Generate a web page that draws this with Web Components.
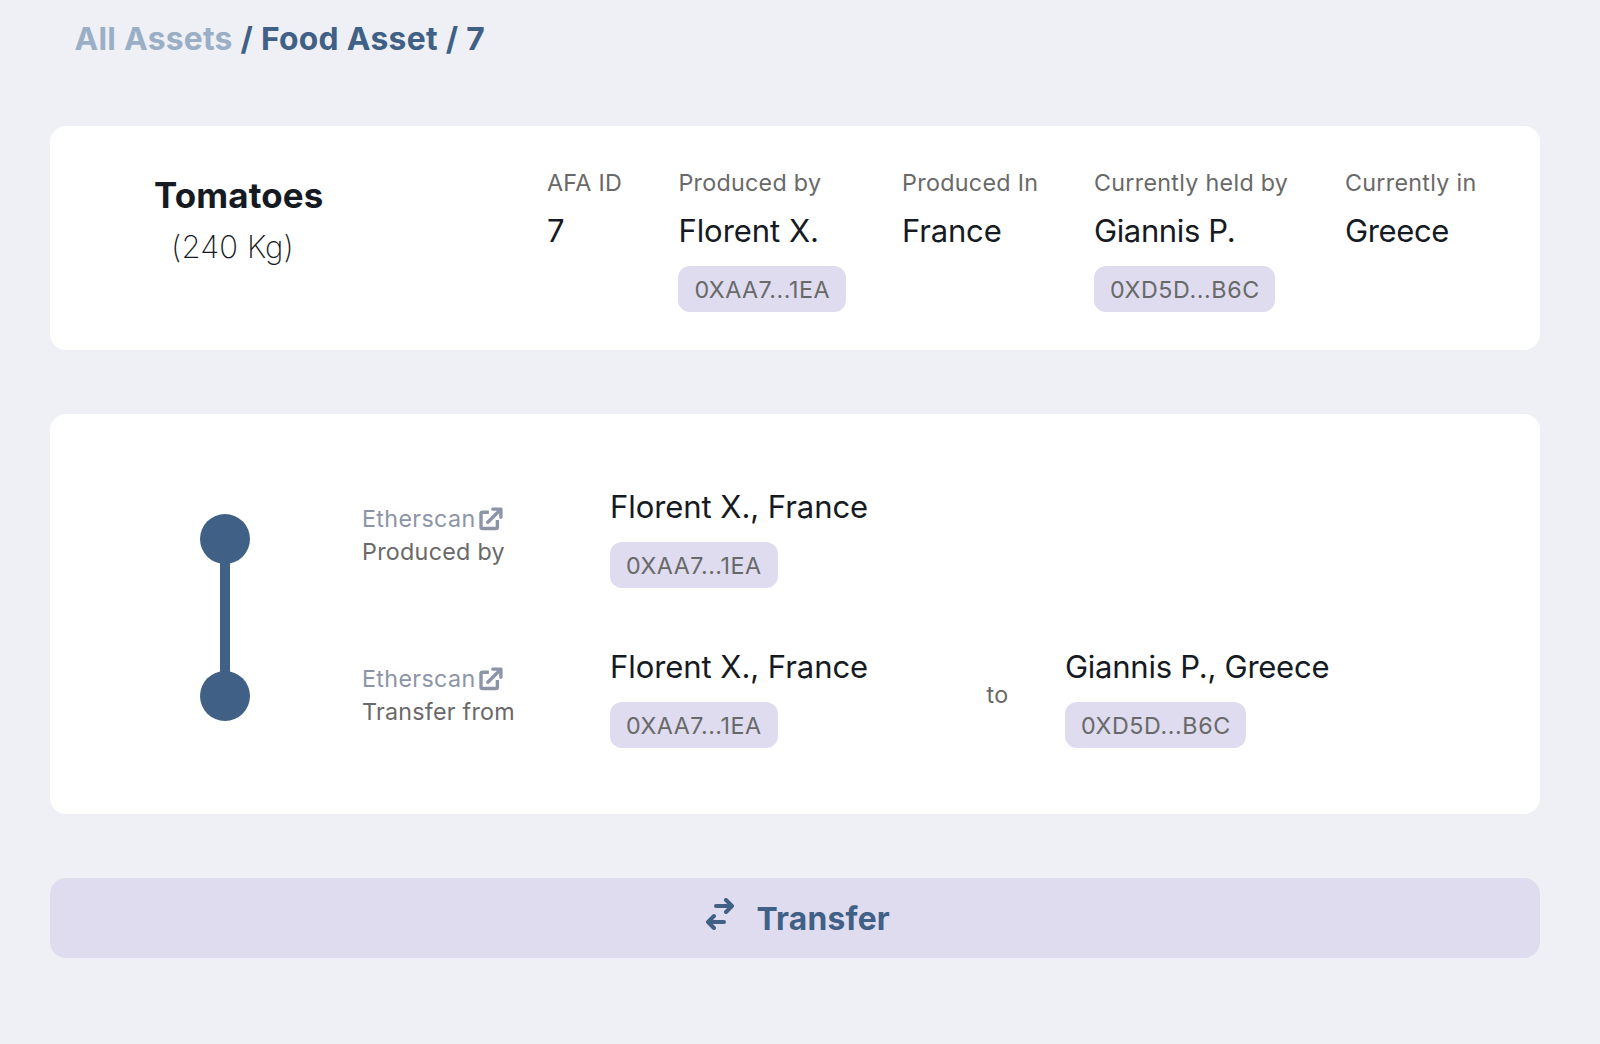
<!DOCTYPE html>
<html lang="en">
<head>
<meta charset="utf-8">
<title>Food Asset / 7</title>
<style>
  body { margin: 0; background: #eff0f5; color: #151a23; font-family: Inter, "Liberation Sans", sans-serif; }
</style>
</head>
<body>
<asset-page></asset-page>
<script>
const define = (name, html) => {
  const template = document.createElement('template');
  template.innerHTML = html;
  customElements.define(name, class extends HTMLElement {
    constructor() {
      super();
      this.attachShadow({ mode: 'open' }).append(template.content.cloneNode(true));
    }
  });
};

define('text-line', `
  <style>
    :host { display: block; white-space: nowrap; font-size: 31.04px; line-height: 37px; letter-spacing: var(--ls, 0); }
    :host([small]) { font-size: 23.28px; line-height: 29px; color: #696969; }
    :host([strong]) { font-size: 31.8px; line-height: 37px; font-weight: 700; }
    :host([large]) { font-size: 34.92px; line-height: 42px; font-weight: 700; }
  </style><slot></slot>`);

define('address-chip', `
  <style>
    :host { display: block; box-sizing: border-box; width: 168px; height: 46px; padding: 9px 16px 8px;
      margin-top: 17px; border-radius: 12px; background: #dfdcef; --ls: .5px; }
    :host([wide]) { width: 181px; --ls: .6px; }
  </style><text-line small><slot></slot></text-line>`);

define('bread-crumb', `
  <style>
    :host { display: block; padding: 20px 0 69px 24.5px; color: #406086; }
    .all { color: #9aafc5; letter-spacing: .25px; }
  </style>
  <text-line strong style="--ls:.3px"><span class="all">All Assets</span> / Food Asset / 7</text-line>`);

define('panel-card', `
  <style>
    :host { display: flex; box-sizing: border-box; background: #fff; border-radius: 16px; }
  </style><slot></slot>`);

define('asset-field', `
  <style>
    :host { display: block; }
    .value { margin-top: 15px; }
  </style>
  <slot name="label"></slot><div class="value"><slot></slot></div>`);

define('asset-title', `
  <style>
    :host { display: block; width: 393px; padding-top: 6px; }
    .qty { padding: 12px 0 0 17px; font-weight: 250; }
  </style>
  <text-line large style="--ls:.14px"><slot></slot></text-line>
  <div class="qty"><slot name="quantity"></slot></div>`);

define('asset-summary', `
  <style>
    panel-card { height: 224px; padding: 42px 0 0 104px; }
    :host { display: block; }
    .fields { display: grid; grid-template-columns: 131.4px 223.6px 192px 251px auto; }
  </style>
  <panel-card>
    <asset-title>Tomatoes<text-line slot="quantity" style="--ls:.1px">(240 Kg)</text-line></asset-title>
    <div class="fields">
      <asset-field><text-line small slot="label" style="--ls:.3px">AFA ID</text-line><text-line>7</text-line></asset-field>
      <asset-field><text-line small slot="label" style="--ls:.29px">Produced by</text-line><text-line style="--ls:-.05px">Florent X.</text-line><address-chip>0XAA7...1EA</address-chip></asset-field>
      <asset-field><text-line small slot="label" style="--ls:.33px">Produced In</text-line><text-line style="--ls:-.18px">France</text-line></asset-field>
      <asset-field><text-line small slot="label" style="--ls:.3px">Currently held by</text-line><text-line style="--ls:-.39px">Giannis P.</text-line><address-chip wide>0XD5D...B6C</address-chip></asset-field>
      <asset-field><text-line small slot="label" style="--ls:.3px">Currently in</text-line><text-line style="--ls:-.38px">Greece</text-line></asset-field>
    </div>
  </panel-card>`);

define('time-line', `
  <style>
    :host { display: flex; flex-direction: column; align-items: center; width: 50px; padding-top: 26px; }
    .dot { width: 50px; height: 50px; border-radius: 50%; background: #406086; }
    .bar { width: 10px; height: 111px; margin: -2px 0; background: #406086; }
  </style><div class="dot"></div><div class="bar"></div><div class="dot"></div>`);

define('scan-link', `
  <style>
    :host { display: flex; align-items: flex-start; margin-bottom: 4px; }
    text-line { color: #8c95a6 !important; --ls: .36px; width: 117px; }
    svg { display: block; margin-top: 3px; }
  </style>
  <text-line small>Etherscan</text-line>
  <svg width="25" height="25" viewBox="0 .4 25 25" fill="none" stroke="#8c95a6" stroke-width="3.4" stroke-linecap="round" stroke-linejoin="round">
    <path stroke-linecap="butt" d="M9.9 5.7H3.6a1.6 1.6 0 0 0-1.6 1.6V20.3a1.6 1.6 0 0 0 1.6 1.6H16.8a1.6 1.6 0 0 0 1.6-1.6V13.4"/>
    <path d="M13.8 2.5H21.9V10.7M21.4 3.1L8.8 15.6"/>
  </svg>`);

define('history-row', `
  <style>
    :host { display: grid; grid-template-columns: 248px 376.4px 78.6px auto; height: 100px; }
    .kind { padding-top: 16px; }
    .to { padding-top: 32px; }
  </style>
  <div class="kind"><scan-link></scan-link><slot name="kind"></slot></div>
  <div><slot name="from"></slot></div>
  <div class="to"><slot name="join"></slot></div>
  <div><slot name="dest"></slot></div>`);

define('asset-history', `
  <style>
    :host { display: block; margin-top: 64px; }
    panel-card { height: 400px; padding: 74px 0 0 150px; gap: 112px; }
    .rows { display: flex; flex-direction: column; gap: 60px; }
  </style>
  <panel-card>
    <time-line></time-line>
    <div class="rows">
      <history-row>
        <text-line small slot="kind" style="--ls:.29px">Produced by</text-line>
        <div slot="from"><text-line style="--ls:-.07px">Florent X., France</text-line><address-chip>0XAA7...1EA</address-chip></div>
      </history-row>
      <history-row>
        <text-line small slot="kind" style="--ls:.25px">Transfer from</text-line>
        <div slot="from"><text-line style="--ls:-.07px">Florent X., France</text-line><address-chip>0XAA7...1EA</address-chip></div>
        <text-line small slot="join" style="--ls:.6px">to</text-line>
        <div slot="dest"><text-line style="--ls:-.27px">Giannis P., Greece</text-line><address-chip wide>0XD5D...B6C</address-chip></div>
      </history-row>
    </div>
  </panel-card>`);

define('transfer-button', `
  <style>
    :host { display: block; margin-top: 64px; }
    button { display: flex; align-items: flex-start; width: 100%; height: 80px; margin: 0; border: 0; border-radius: 16px;
      padding: 20px 0 0 656px; gap: 22.5px; background: #dfdcef; color: #406086; font: inherit; font-weight: 700; }
    text-line { margin-top: 2px; --ls: .2px; }
    svg { display: block; }
  </style>
  <button>
    <svg width="28" height="32" viewBox="0 0 28 32" fill="none" stroke="currentColor" stroke-width="4" stroke-linecap="round" stroke-linejoin="round">
      <path d="M10 8H26M20 2l6 6-6 6M18 24H2M8 18l-6 6 6 6"/>
    </svg>
    <text-line strong>Transfer</text-line>
  </button>`);

define('asset-page', `
  <style>
    :host { display: block; box-sizing: border-box; height: 1044px; padding: 0 60px 0 50px; }
  </style>
  <bread-crumb></bread-crumb>
  <asset-summary></asset-summary>
  <asset-history></asset-history>
  <transfer-button></transfer-button>`);
</script>
</body>
</html>
